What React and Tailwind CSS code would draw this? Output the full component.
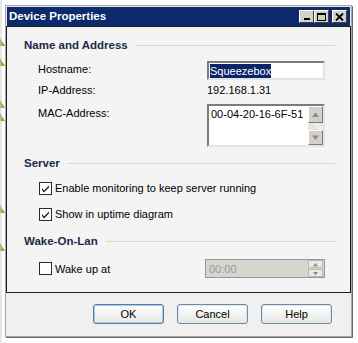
import React from 'react';

const font = { fontFamily: '"Liberation Sans", Arial, sans-serif' };

function Header({ children }) {
  return (
    <div className="flex items-center h-[14px] pl-[17px] pr-[15px]">
      <span className="text-[11.5px] font-bold text-[#1b2a48] leading-[14px]">{children}</span>
      <div className="flex-1 h-px bg-[#d6d6d6] ml-[8px]" />
    </div>
  );
}

function Check({ checked }) {
  return (
    <svg width="13" height="13" viewBox="0 0 13 13" className="shrink-0">
      <rect x="0.5" y="0.5" width="12" height="12" fill="#fff" stroke="#2b2b2b" />
      {checked && (
        <path d="M3 6 L5 8.5 L10 3.5 L10 5.5 L5 10.5 L3 8 Z" fill="#222" />
      )}
    </svg>
  );
}

function Arrow({ up, small }) {
  const s = small ? 5 : 7;
  return (
    <svg width={s + 2} height={s} viewBox="0 0 9 7">
      {up ? (
        <path d="M1 6 L4.5 1.5 L8 6 Z" fill="#8a8a8a" />
      ) : (
        <path d="M1 1.5 L4.5 6 L8 1.5 Z" fill="#8a8a8a" />
      )}
    </svg>
  );
}

function Btn({ children, def }) {
  return (
    <button
      className={`w-[71px] h-[20px] rounded-[3px] border text-[11px] text-black bg-gradient-to-b from-[#ffffff] to-[#e6e6e4] ${
        def ? 'border-[#4f7ea8] shadow-[inset_0_0_0_1px_#a8cbe8]' : 'border-[#6f8aa0] shadow-[inset_0_0_0_1px_#dfe7ee]'
      }`}
    >
      {children}
    </button>
  );
}

export default function App() {
  return (
    <div className="w-[358px] h-[343px] bg-white relative overflow-hidden" style={font}>
      <svg className="absolute left-0 top-0" width="6" height="343" viewBox="0 0 6 343">
        <path d="M0 38 L5 46 L0 46 Z" fill="#9aa02a" />
        <path d="M0 58 L5 66 L0 66 Z" fill="#9aa02a" />
        <path d="M0 100 L5 108 L0 108 Z" fill="#9aa02a" />
        <path d="M0 113 L5 121 L0 121 Z" fill="#9aa02a" />
        <path d="M0 205 L5 213 L0 213 Z" fill="#9aa02a" />
        <path d="M0 243 L5 251 L0 251 Z" fill="#9aa02a" />
        <path d="M1 0 L1 343" stroke="#cfcfcf" />
      </svg>
      <div className="pt-[5px] pl-[5px]">
        <div className="w-[347px] h-[332px] border border-[#a6a6a6] bg-[#e8e8e8] flex flex-col shadow-[1px_1px_0_#6a6a6a]">
          {/* title bar */}
          <div className="h-[19px] mt-[1px] mx-[1px] bg-[#0c2a6c] flex items-center pl-[2px] pr-[3px]">
            <span className="text-[11.5px] font-bold text-white leading-none">Device Properties</span>
            <div className="ml-auto flex items-center">
              <div className="w-[15px] h-[13px] bg-[#d4d0c8] border border-t-white border-l-white border-b-[#404040] border-r-[#404040] flex items-end justify-center pb-[2px]">
                <div className="w-[6px] h-[2px] bg-black" />
              </div>
              <div className="w-[15px] h-[13px] bg-[#d4d0c8] border border-t-white border-l-white border-b-[#404040] border-r-[#404040] flex items-center justify-center">
                <div className="w-[9px] h-[8px] border border-black border-t-2" />
              </div>
              <div className="w-[15px] h-[13px] ml-[3px] bg-[#d4d0c8] border border-t-white border-l-white border-b-[#404040] border-r-[#404040] flex items-center justify-center">
                <svg width="9" height="8" viewBox="0 0 9 8">
                  <path d="M1 0.5 L8 7.5 M8 0.5 L1 7.5" stroke="#000" strokeWidth="1.8" />
                </svg>
              </div>
            </div>
          </div>
          {/* main panel */}
          <div className="h-[267px] border border-[#1e1e1e] bg-[#f4f4f4] flex flex-col pt-[11px] text-[11px] text-black">
            <Header>Name and Address</Header>
            <div className="flex items-start h-[19px] mt-[9px]">
              <span className="w-[200px] pl-[31px] leading-[14px] pt-[1px]">Hostname:</span>
              <div className="w-[118px] h-[19px] bg-white border-2 border-t-[#7b7b7b] border-l-[#7b7b7b] border-b-[#e4e4e4] border-r-[#e4e4e4] flex items-center pl-[1px]">
                <span className="bg-[#0a246a] text-white leading-[14px]">Squeezebox</span>
              </div>
            </div>
            <div className="flex items-center h-[14px] mt-[3px]">
              <span className="w-[200px] pl-[31px] leading-[14px]">IP-Address:</span>
              <span className="leading-[14px]">192.168.1.31</span>
            </div>
            <div className="flex items-start h-[43px] mt-[7px]">
              <span className="w-[200px] pl-[31px] leading-[14px] pt-[2px]">MAC-Address:</span>
              <div className="w-[118px] h-[43px] bg-white border-2 border-t-[#7b7b7b] border-l-[#7b7b7b] border-b-[#e4e4e4] border-r-[#e4e4e4] flex">
                <span className="flex-1 leading-[14px] pl-[2px] pt-[1px] whitespace-nowrap">00-04-20-16-6F-51</span>
                <div className="w-[15px] flex flex-col bg-[repeating-linear-gradient(45deg,#dcdcdc_0px,#dcdcdc_1px,#f4f4f4_1px,#f4f4f4_2px)]">
                  <div className="h-[17px] bg-[#d4d0c8] border border-t-white border-l-white border-b-[#7b7b7b] border-r-[#7b7b7b] flex items-center justify-center">
                    <Arrow up />
                  </div>
                  <div className="flex-1" />
                  <div className="h-[15px] bg-[#d4d0c8] border border-t-white border-l-white border-b-[#7b7b7b] border-r-[#7b7b7b] flex items-center justify-center">
                    <Arrow />
                  </div>
                </div>
              </div>
            </div>
            <div className="mt-[9px]">
              <Header>Server</Header>
            </div>
            <div className="flex items-center h-[14px] mt-[11px] pl-[32px] gap-[3px]">
              <Check checked />
              <span className="leading-[14px]">Enable monitoring to keep server running</span>
            </div>
            <div className="flex items-center h-[14px] mt-[12px] pl-[32px] gap-[3px]">
              <Check checked />
              <span className="leading-[14px]">Show in uptime diagram</span>
            </div>
            <div className="mt-[13px]">
              <Header>Wake-On-Lan</Header>
            </div>
            <div className="flex items-center h-[19px] mt-[11px]">
              <div className="w-[198px] pl-[32px] flex items-center gap-[3px]">
                <Check />
                <span className="leading-[14px]">Wake up at</span>
              </div>
              <div className="w-[120px] h-[19px] bg-[#d8d5cd] border border-[#8f99a3] flex items-center">
                <span className="flex-1 pl-[3px] text-[#9a9a9a] leading-[14px]">00:00</span>
                <div className="w-[15px] h-[17px] flex flex-col justify-between mr-[1px]">
                  <div className="h-[8px] bg-[#ece9e2] border border-[#b8b8b8] flex items-center justify-center">
                    <Arrow up small />
                  </div>
                  <div className="h-[8px] bg-[#ece9e2] border border-[#b8b8b8] flex items-center justify-center">
                    <Arrow small />
                  </div>
                </div>
              </div>
            </div>
          </div>
          {/* button strip */}
          <div className="flex-1 bg-[#f0f0f0] flex items-start pt-[11px] pl-[87px] gap-[13px]">
            <Btn def>OK</Btn>
            <Btn>Cancel</Btn>
            <Btn>Help</Btn>
          </div>
        </div>
      </div>
    </div>
  );
}
